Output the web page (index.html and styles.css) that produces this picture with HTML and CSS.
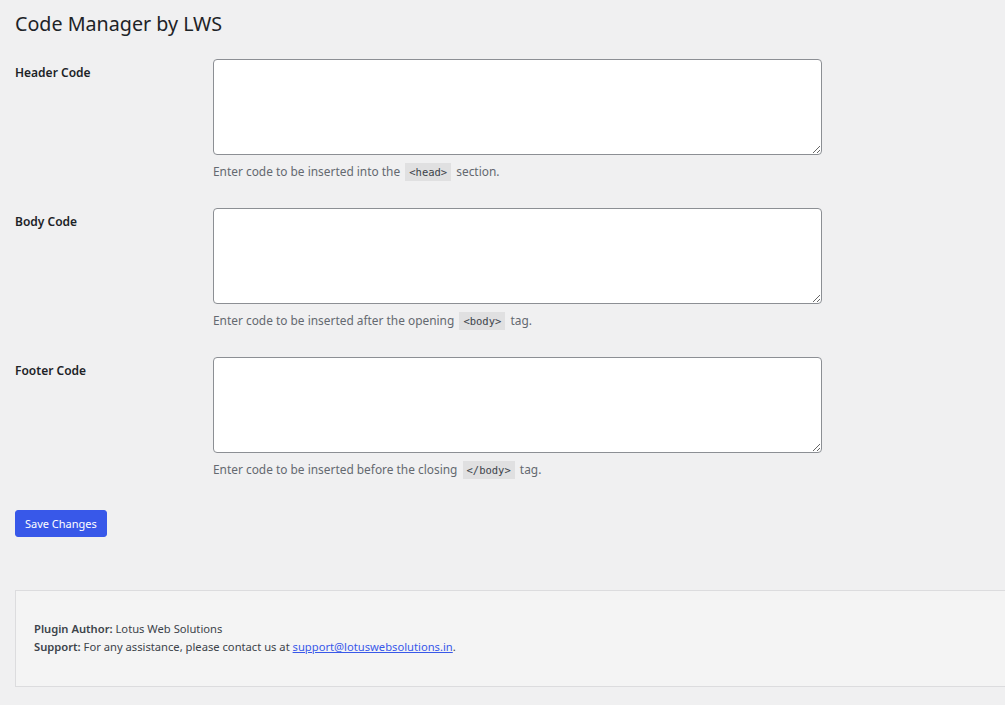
FILE: index.html
```html
<!DOCTYPE html>
<html>
<head>
<meta charset="utf-8">
<link rel="stylesheet" href="styles.css">
</head>
<body>
<div class="wrap">
  <h1 class="title">Code Manager by LWS</h1>
  <form class="settings">
    <div class="row">
      <label class="row-label" for="hc">Header Code</label>
      <div class="field">
        <textarea id="hc" class="code-area"></textarea>
        <p class="desc">Enter code to be inserted into the <code>&lt;head&gt;</code> section.</p>
      </div>
    </div>
    <div class="row">
      <label class="row-label" for="bc">Body Code</label>
      <div class="field">
        <textarea id="bc" class="code-area"></textarea>
        <p class="desc">Enter code to be inserted after the opening <code>&lt;body&gt;</code> tag.</p>
      </div>
    </div>
    <div class="row">
      <label class="row-label" for="fc">Footer Code</label>
      <div class="field">
        <textarea id="fc" class="code-area"></textarea>
        <p class="desc">Enter code to be inserted before the closing <code>&lt;/body&gt;</code> tag.</p>
      </div>
    </div>
    <div class="submit-row">
      <button type="button" class="btn-primary">Save Changes</button>
    </div>
  </form>
  <div class="info-box">
    <p><strong>Plugin Author:</strong> Lotus Web Solutions</p>
    <p><strong>Support:</strong> For any assistance, please contact us at <a href="#">support@lotuswebsolutions.in</a>.</p>
  </div>
</div>
</body>
</html>
```
FILE: styles.css
```css
html, body {
  margin: 0;
  padding: 0;
  overflow: hidden;
}
body {
  background: #f0f0f1;
  color: #3c434a;
  font-family: "Noto Sans", "Open Sans", sans-serif;
  font-size: 13px;
  line-height: 1.4;
}
.wrap {
  padding: 0 0 0 15px;
}
.title {
  margin: 0;
  padding: 9px 0 0 0;
  font-size: 19.7px;
  font-weight: 400;
  line-height: 30px;
  color: #1d2327;
}
.settings {
  margin-top: 20px;
}
.row {
  display: grid;
  grid-template-columns: 198px 609px;
  height: 122px;
  margin-bottom: 27px;
}
.row-label {
  font-size: 12px;
  font-weight: 600;
  color: #1d2327;
  padding-top: 5px;
  line-height: 18px;
}
.field {
  display: flex;
  flex-direction: column;
}
.code-area {
  box-sizing: border-box;
  width: 609px;
  height: 96px;
  flex: none;
  margin: 0;
  border: 1px solid #8c8f94;
  border-radius: 4px;
  background: #fff;
  resize: both;
  font-family: "Liberation Mono", monospace;
}
.desc {
  margin: 7px 0 0 0;
  height: 18px;
  font-size: 11.9px;
  line-height: 18px;
  color: #646970;
}
.desc code {
  font-family: "DejaVu Sans Mono", monospace;
  font-size: 10.5px;
  line-height: 1;
  background: #e0e0e1;
  padding: 3px 4px;
  margin: 0 2px;
  color: #3c434a;
}
.submit-row {
  display: flex;
  padding-top: 4px;
}
.btn-primary {
  background: #3858e9;
  border: 1px solid #3858e9;
  border-radius: 3px;
  color: #fff;
  font-family: inherit;
  font-size: 11px;
  height: 27px;
  padding: 0 9px;
  line-height: 25px;
  cursor: pointer;
}
.info-box {
  margin-top: 53px;
  width: calc(100% + 20px);
  box-sizing: border-box;
  background: #f4f4f4;
  border: 1px solid #dcdcde;
  padding: 29px 18px 27px 18px;
  height: 97px;
}
.info-box p {
  margin: 0;
  font-size: 11.2px;
  line-height: 18px;
  color: #3c434a;
}
.info-box strong {
  font-weight: 600;
}
.info-box a {
  color: #3858e9;
}
```
